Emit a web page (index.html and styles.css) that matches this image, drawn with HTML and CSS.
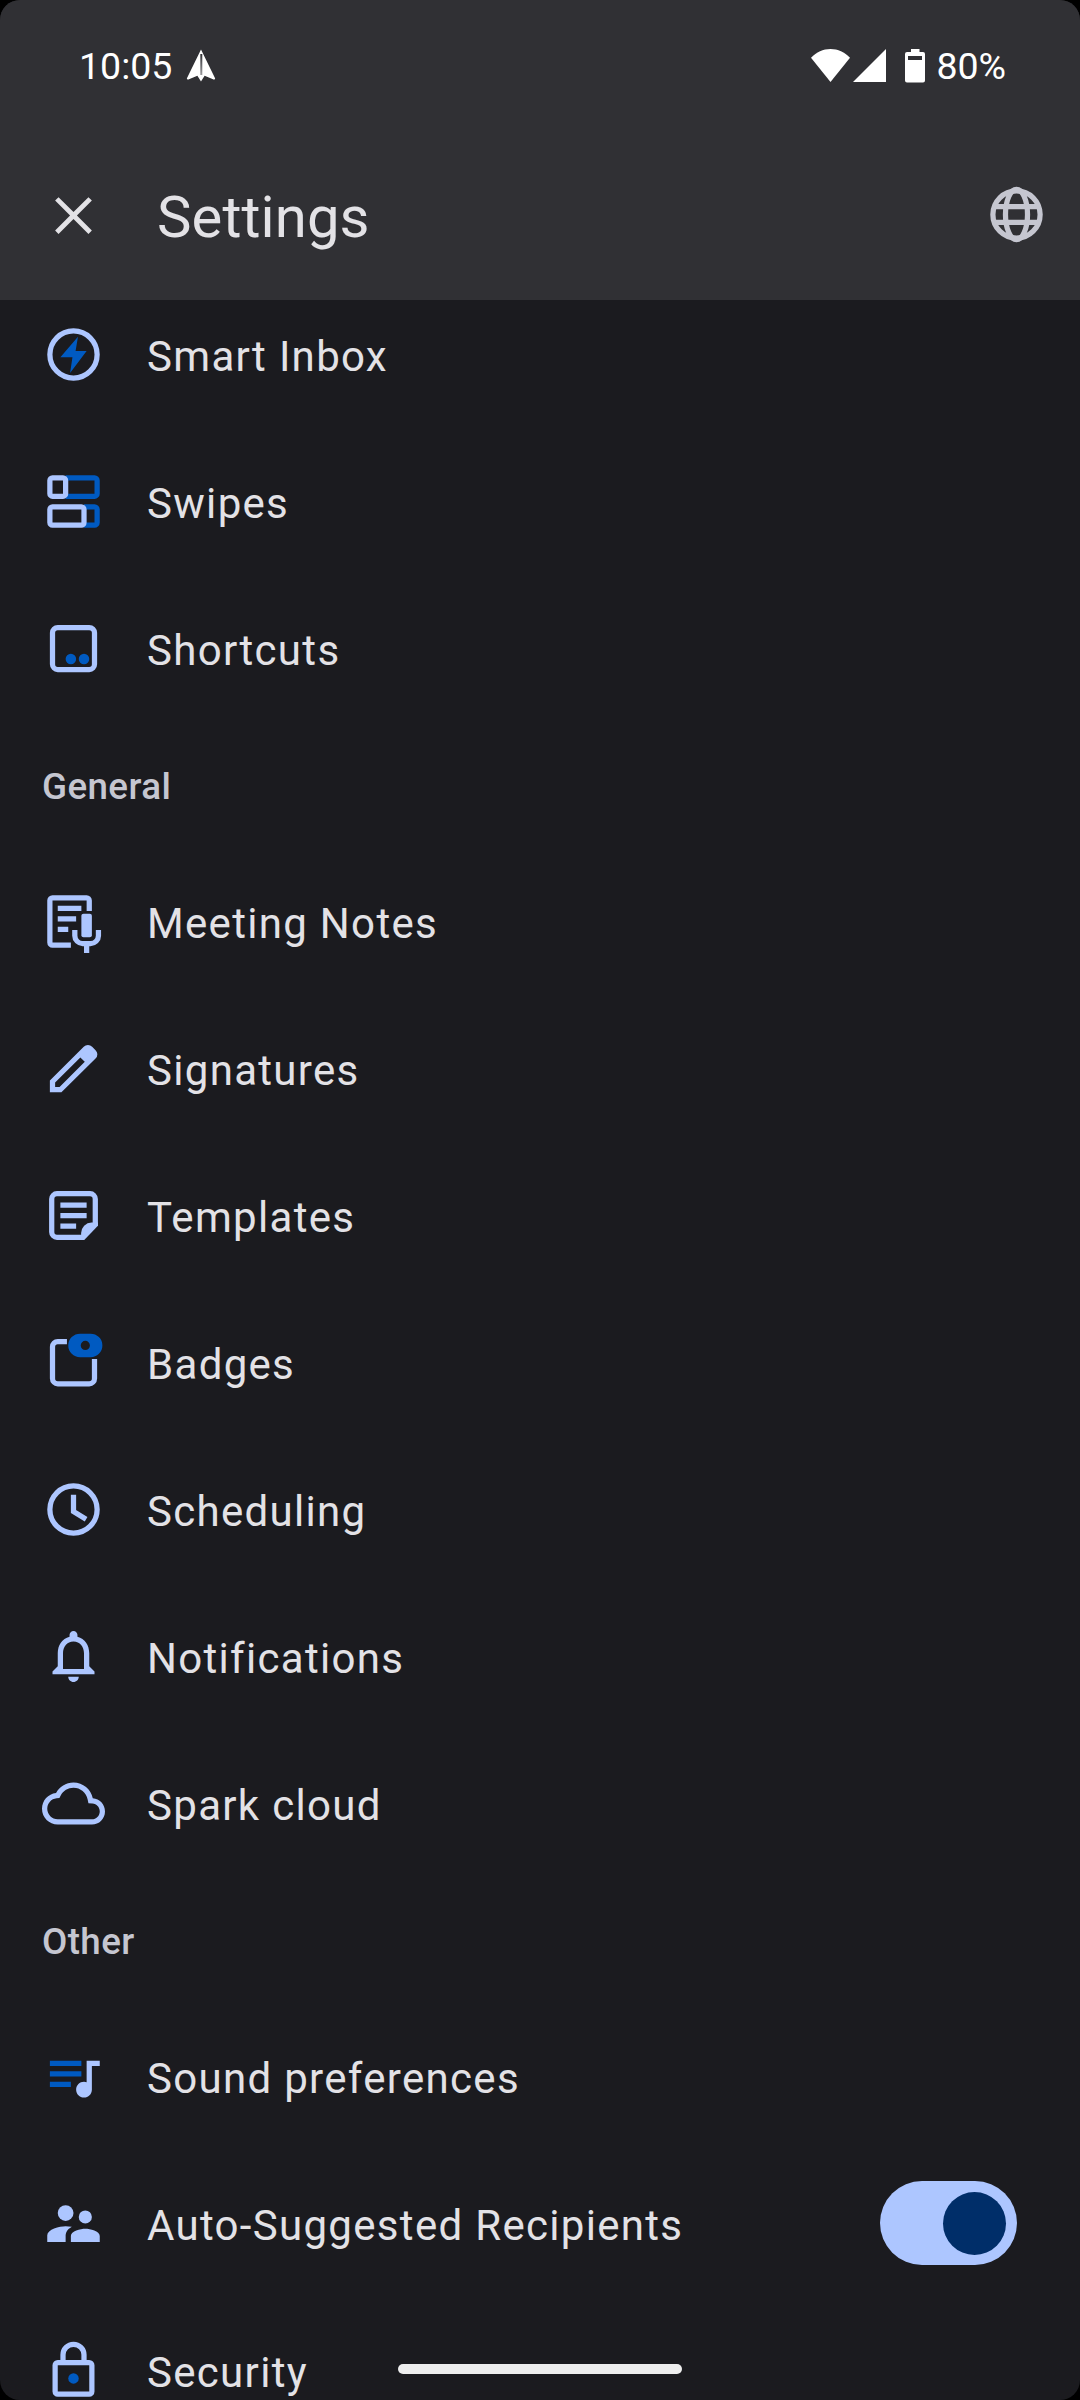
FILE: index.html
```html
<!DOCTYPE html>
<html lang="en">
<head>
<meta charset="utf-8">
<title>Settings</title>
<link rel="stylesheet" href="styles.css">
</head>
<body>
<div class="screen">
  <header class="top">
    <div class="status">
      <span class="status-text">10:05</span>
      <svg class="plane" viewBox="0 0 30 33"><defs><linearGradient id="fold" x1="0" y1="0" x2="0" y2="1"><stop offset="0" stop-color="#303034"/><stop offset="1" stop-color="#9a9a9d"/></linearGradient></defs><path d="M15 .5 .8 29.5l1 1.2 9.600-4L15 32.500l3.600-5.800 9.600 4 1-1.200z"/><path fill="url(#fold)" d="M14.300 5h2v21h-2z"/></svg>
      <span class="spacer"></span>
      <svg class="wifi" viewBox="0 0 39 33"><path d="M19.500 0C12 0 5.500 3 0 8.700L19.500 33 39 8.700C33.500 3 27 0 19.500 0z"/></svg>
      <svg class="signal" viewBox="0 0 33 33"><path d="M33 0v33H0z"/></svg>
      <svg class="battery" viewBox="0 0 20 34"><path fill-rule="evenodd" d="M6 0h8.500v3H18a2 2 0 0 1 2 2v26.500a2 2 0 0 1-2 2H2a2 2 0 0 1-2-2V5a2 2 0 0 1 2-2h4zM3 7v4h14V7z"/></svg>
      <span class="status-text">80%</span>
    </div>
    <div class="toolbar">
      <svg class="icon close" viewBox="0 0 24 24"><path d="M19 6.300 17.700 5 12 10.700 6.300 5 5 6.300 10.700 12 5 17.700 6.300 19 12 13.300 17.700 19 19 17.700 13.300 12z"/></svg>
      <h1 class="title">Settings</h1>
      <svg class="icon globe" viewBox="0 0 24 24"><circle cx="12" cy="12" r="9"/><ellipse cx="12" cy="12" rx="4.200" ry="9.600"/><path d="M3.500 9h17M3.500 15h17"/></svg>
    </div>
  </header>
  <main class="list">
    <div class="row">
      <svg class="icon" viewBox="0 0 24 24"><circle class="line" cx="12" cy="12" r="9"/><path class="deep" d="M13.700 5.200 7 13h4.600l-.9 6L17 10.700h-4.200z"/></svg>
      <span class="label">Smart Inbox</span>
    </div>
    <div class="row">
      <svg class="icon" viewBox="0 0 24 24"><g class="deep-line"><path d="M9 3h11a1 1 0 0 1 1 1v5a1 1 0 0 1-1 1H9M16 14h4a1 1 0 0 1 1 1v5a1 1 0 0 1-1 1h-4"/></g><rect class="line" x="3" y="3" width="6" height="7" rx="1"/><rect class="line" x="3" y="14" width="13" height="7" rx="1"/></svg>
      <span class="label">Swipes</span>
    </div>
    <div class="row">
      <svg class="icon" viewBox="0 0 24 24"><rect class="line" x="4" y="4" width="16" height="16" rx="2"/><circle class="deep" cx="11" cy="16" r="2"/><circle class="deep" cx="16" cy="16" r="2"/></svg>
      <span class="label">Shortcuts</span>
    </div>
    <h2 class="section">General</h2>
    <div class="row">
      <svg class="icon" viewBox="0 0 24 24"><path class="line" d="M11 21H4a1 1 0 0 1-1-1V4a1 1 0 0 1 1-1h13a1 1 0 0 1 1 1v4M6 7h9M6 11h7M6 15h4M12.500 15.200v2.200a3 3 0 0 0 3 3h3a3 3 0 0 0 3-3v-2.200M17 20.400V24"/><rect class="fill" x="15" y="9" width="4" height="9" rx=".8"/></svg>
      <span class="label">Meeting Notes</span>
    </div>
    <div class="row">
      <svg class="icon" viewBox="0 0 24 24"><path class="fill" fill-rule="evenodd" d="M3 21v-4.400L15.900 3.700a2.200 2.200 0 0 1 3.200 0l1.300 1.300a2.200 2.200 0 0 1 0 3.200L7.400 21zM5 19h1.700l9.600-9.600-1.700-1.600L5 17.300z"/></svg>
      <span class="label">Signatures</span>
    </div>
    <div class="row">
      <svg class="icon" viewBox="0 0 24 24"><path class="line" d="M15.900 20.300H5.700a2 2 0 0 1-2-2V5.700a2 2 0 0 1 2-2h12.600a2 2 0 0 1 2 2v10.200M7 8h10M7 12h10M7 16h6"/><path class="fill" d="M16.100 21.300h-1.200v-2.600a4 4 0 0 1 4-4h2.400v1.200z"/></svg>
      <span class="label">Templates</span>
    </div>
    <div class="row">
      <svg class="icon" viewBox="0 0 24 24"><path class="line" d="M9.500 4H6a2 2 0 0 0-2 2v12.100a2 2 0 0 0 2 2h12a2 2 0 0 0 2-2v-7.400"/><path class="deep" fill-rule="evenodd" d="M14.500 1h4a4.500 4.500 0 0 1 0 9h-4a4.500 4.500 0 0 1 0-9zM16.500 3.750a1.750 1.750 0 1 0 0 3.500 1.750 1.750 0 0 0 0-3.500z"/></svg>
      <span class="label">Badges</span>
    </div>
    <div class="row">
      <svg class="icon" viewBox="0 0 24 24"><circle class="line" cx="12" cy="12" r="9"/><path class="line" d="M12 6.400v6.400l4.800 2.900"/></svg>
      <span class="label">Scheduling</span>
    </div>
    <div class="row">
      <svg class="icon" viewBox="0 0 24 24"><path class="fill" d="M12 21.750c1.100 0 2-.9 2-2h-4c0 1.100.9 2 2 2zm6-6v-5c0-3.070-1.630-5.640-4.500-6.320v-.68c0-.83-.67-1.500-1.500-1.500s-1.500.67-1.500 1.500v.68C7.640 5.110 6 7.670 6 10.750v5l-2 2v1h16v-1l-2-2zm-2 1H8v-6c0-2.480 1.510-4.500 4-4.500s4 2.020 4 4.500v6z"/></svg>
      <span class="label">Notifications</span>
    </div>
    <div class="row">
      <svg class="icon" viewBox="0 0 24 24"><path class="fill" d="M19.350 10.040C18.670 6.590 15.640 4 12 4 9.110 4 6.600 5.640 5.350 8.040 2.340 8.360 0 10.910 0 14c0 3.310 2.690 6 6 6h13c2.760 0 5-2.240 5-5 0-2.640-2.050-4.780-4.650-4.960zM19 18H6c-2.210 0-4-1.790-4-4 0-2.050 1.530-3.760 3.560-3.970l1.070-.11.5-.95C8.080 7.140 9.940 6 12 6c2.620 0 4.880 1.860 5.390 4.430l.3 1.500 1.530.11c1.560.1 2.780 1.410 2.780 2.960 0 1.650-1.350 3-3 3z"/></svg>
      <span class="label">Spark cloud</span>
    </div>
    <h2 class="section">Other</h2>
    <div class="row">
      <svg class="icon" viewBox="0 0 24 24"><path class="deep" d="M3 6h12v2H3zM3 10h12v2H3zM3 14h8v2H3z"/><path class="fill" d="M22 6h-5v8.180c-.31-.11-.65-.18-1-.18-1.660 0-3 1.340-3 3s1.340 3 3 3 3-1.340 3-3V8h3z"/></svg>
      <span class="label">Sound preferences</span>
    </div>
    <div class="row">
      <svg class="icon" viewBox="0 0 24 24"><circle class="fill" cx="9" cy="8" r="3"/><circle class="fill" cx="16.500" cy="9.500" r="2.500"/><path class="fill" d="M16.500 14c-1.830 0-5.500.92-5.500 2.750V19h11v-2.250c0-1.830-3.670-2.750-5.500-2.750zM9 13c-2.330 0-7 1.170-7 3.500V19h7v-2.250c0-.85.33-2.340 2.370-3.470C10.500 13.100 9.660 13 9 13z"/></svg>
      <span class="label">Auto-Suggested Recipients</span>
      <span class="toggle"><span class="thumb"></span></span>
    </div>
    <div class="row">
      <svg class="icon" viewBox="0 0 24 24"><rect class="line" x="5" y="9" width="14" height="12" rx="1"/><path class="line" d="M8 9V6a4 4 0 0 1 8 0v3"/><circle class="deep" cx="12" cy="15" r="2"/></svg>
      <span class="label">Security</span>
    </div>
  </main>
  <div class="home-bar"></div>
</div>
</body>
</html>
```
FILE: styles.css
```css
body {
  margin: 0;
  background: #000;
  font-family: Roboto, sans-serif;
}

.screen {
  position: relative;
  display: flex;
  flex-direction: column;
  width: 1080px;
  height: 2400px;
  overflow: hidden;
  border-radius: 20px;
  background: #1b1b1f;
  color: #e3e2e6;
}

.top {
  flex: none;
  height: 300px;
  background: #303034;
  z-index: 1;
}

.status {
  display: flex;
  align-items: center;
  box-sizing: border-box;
  height: 131px;
  padding: 0 74px 0 79px;
  color: #fff;
  fill: #fff;
}

.status-text {
  font-size: 37.5px;
  line-height: 44px;
}

.spacer {
  flex: 1;
}

.plane {
  width: 30px;
  height: 33px;
  margin-left: 14px;
}

.wifi {
  width: 39px;
  height: 33px;
}

.signal {
  width: 33px;
  height: 33px;
  margin: 0 19px 0 3px;
}

.battery {
  width: 20px;
  height: 34px;
  margin-right: 11px;
}

.toolbar {
  display: flex;
  align-items: center;
  height: 168px;
  padding: 0 32px 0 42px;
}

.icon {
  flex: none;
  width: 63px;
  height: 63px;
}

.close {
  fill: #e3e2e6;
}

.globe {
  margin-top: -1px;
  fill: none;
  stroke: #c5c6d0;
  stroke-width: 2;
}

.title {
  flex: 1;
  margin: 3px 0 0 52px;
  font-size: 58px;
  font-weight: 400;
  line-height: 74px;
  letter-spacing: 0.1px;
}

.list {
  flex: none;
  margin-top: -19px;
}

.row {
  display: flex;
  align-items: center;
  height: 147px;
  padding: 0 63px 0 42px;
}

.label {
  flex: 1;
  margin: 4px 0 0 42px;
  font-size: 42px;
  line-height: 63px;
  letter-spacing: 1.31px;
}

.section {
  height: 126px;
  margin: 0;
  padding-left: 42px;
  color: #c5c6d0;
  font-size: 36.75px;
  font-weight: 500;
  line-height: 130px;
  letter-spacing: 0.4px;
}

.fill {
  fill: #adc6ff;
}

.line {
  fill: none;
  stroke: #adc6ff;
  stroke-width: 2;
}

.deep {
  fill: #005ac1;
}

.deep-line {
  fill: none;
  stroke: #005ac1;
  stroke-width: 2;
}

.toggle {
  display: flex;
  justify-content: flex-end;
  align-items: center;
  box-sizing: border-box;
  width: 137px;
  height: 84px;
  margin-top: -1px;
  padding-right: 11px;
  border-radius: 42px;
  background: #adc6ff;
}

.thumb {
  width: 63px;
  height: 63px;
  border-radius: 50%;
  background: #002e69;
}

.home-bar {
  position: absolute;
  left: 398px;
  top: 2364px;
  width: 284px;
  height: 10px;
  border-radius: 5px;
  background: #eee;
}
```
